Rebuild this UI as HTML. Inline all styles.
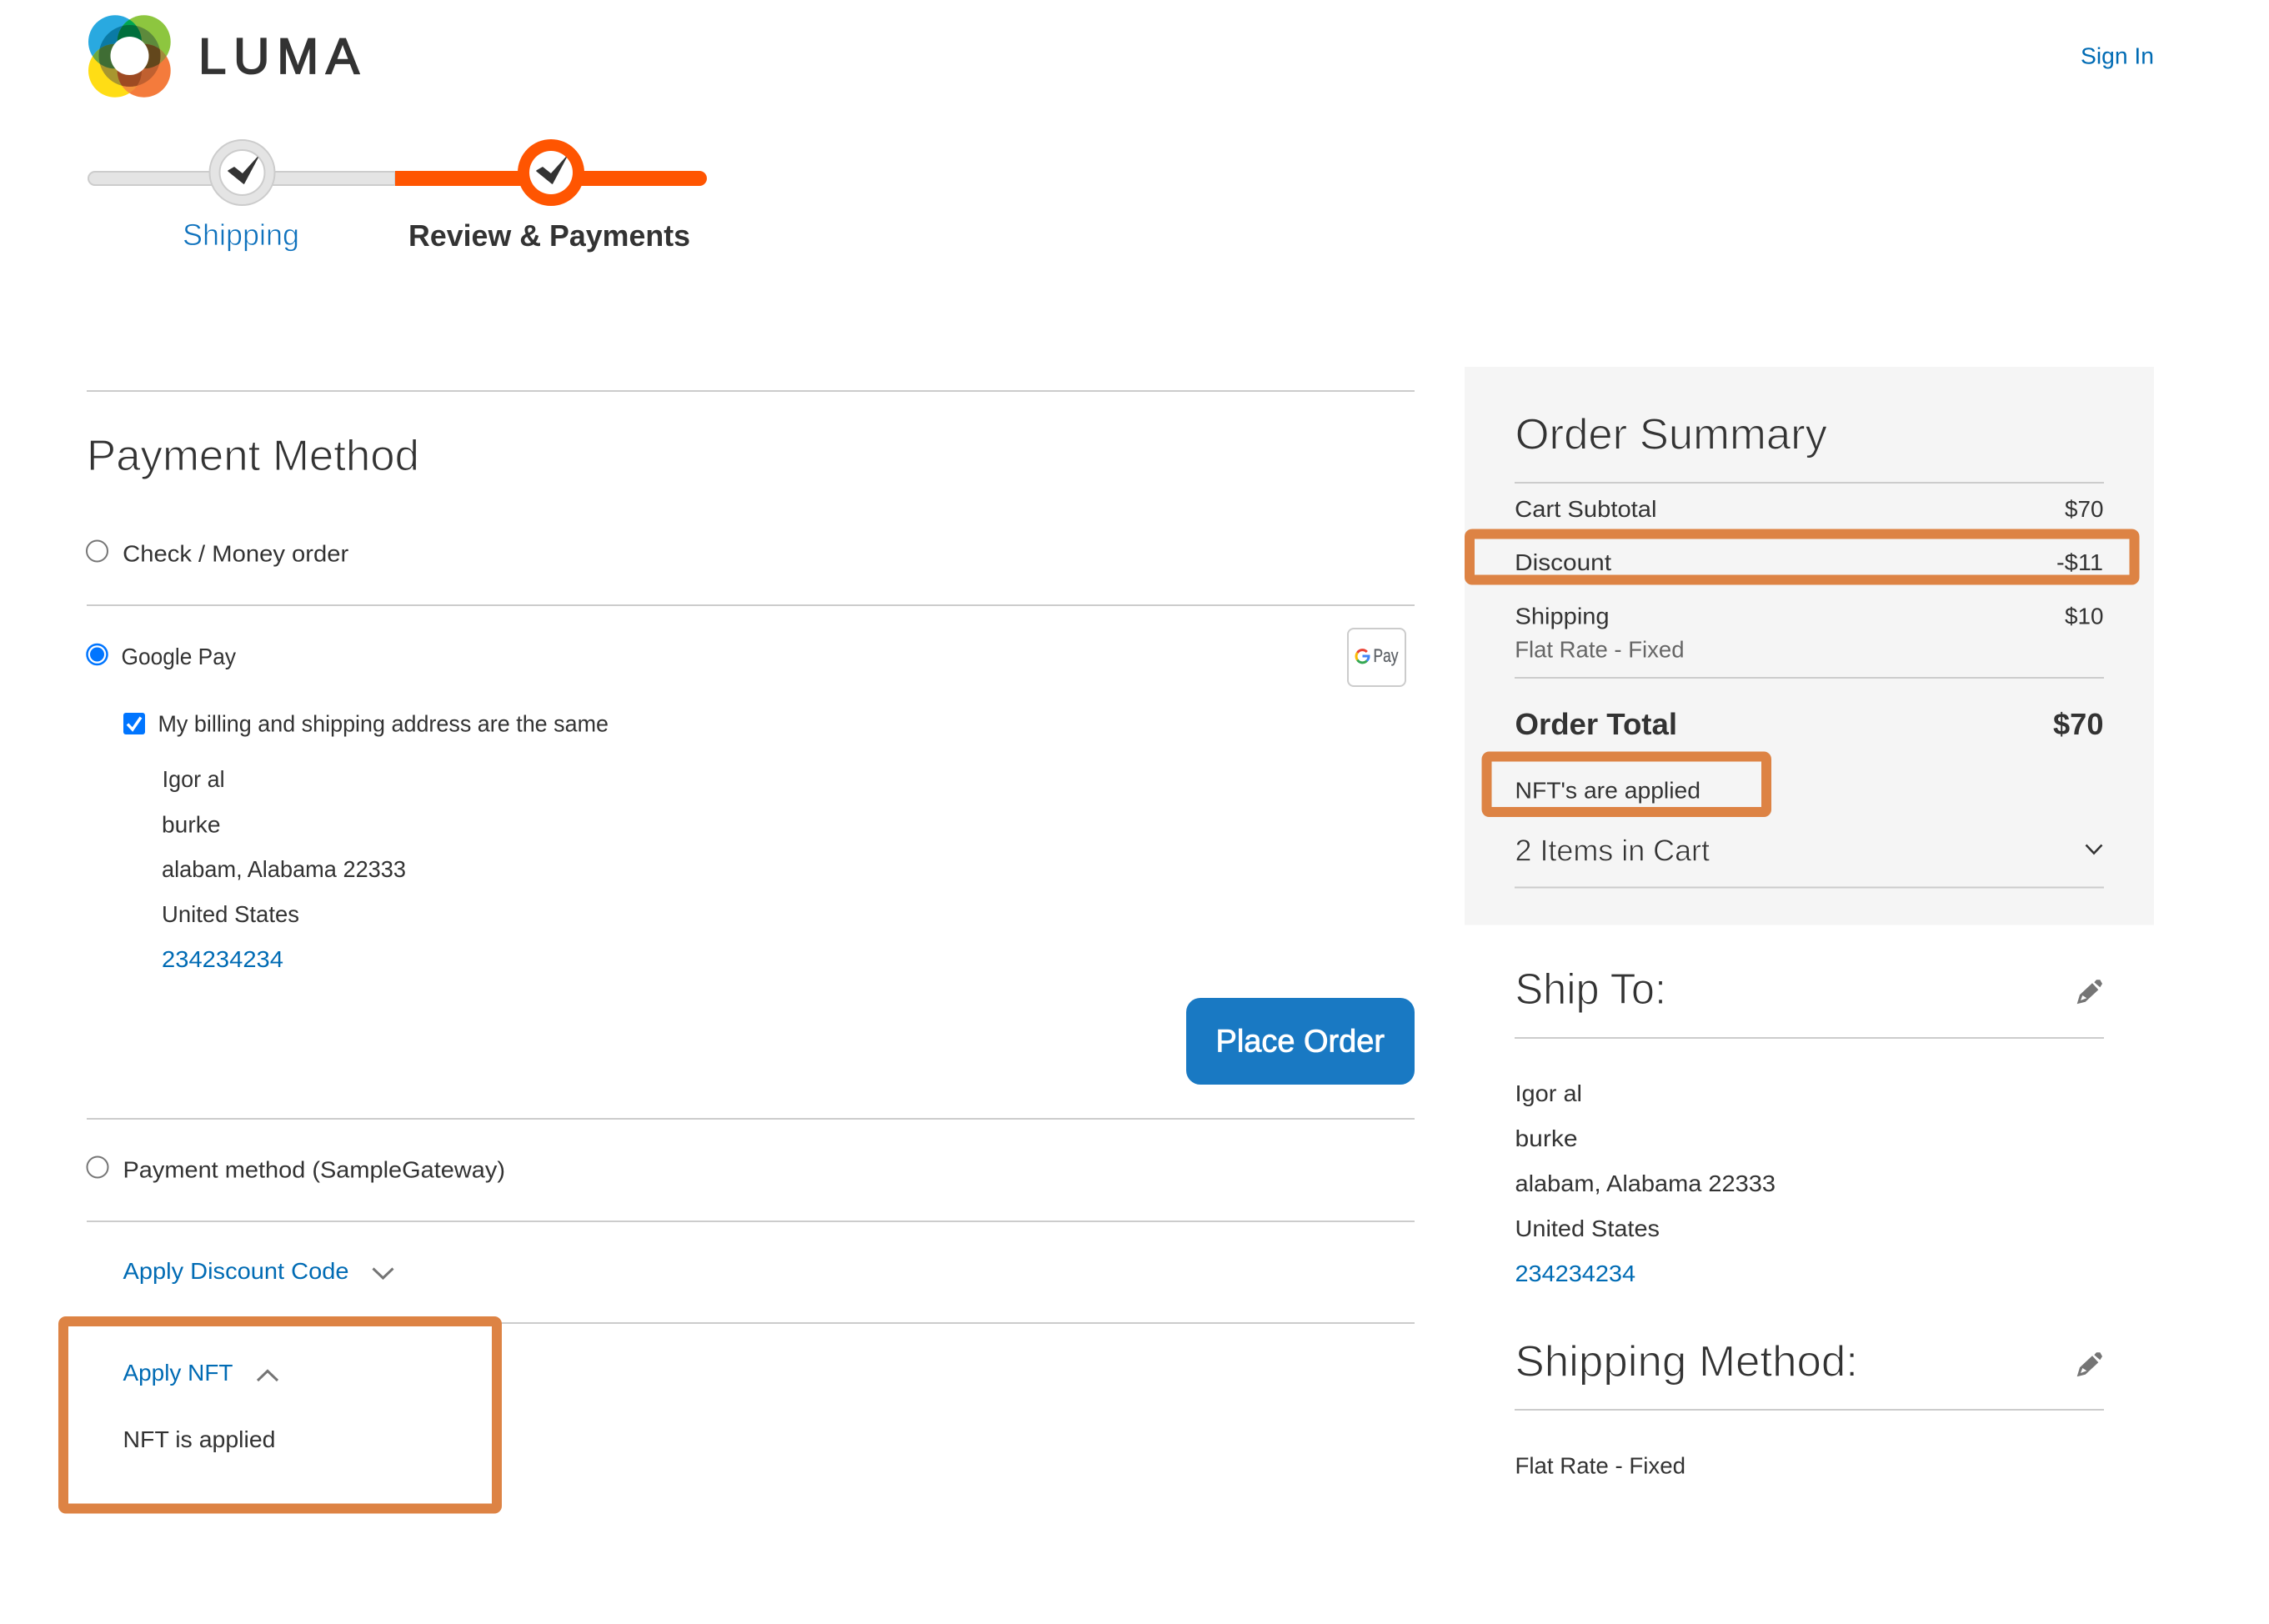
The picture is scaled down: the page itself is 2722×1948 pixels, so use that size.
<!DOCTYPE html>
<html lang="en"><head><meta charset="utf-8"><title>Checkout</title>
<style>
html,body{margin:0;padding:0;background:#fff;width:2722px;height:1948px;overflow:hidden}
svg{display:block;position:absolute;left:0;top:0}
text{font-family:"Liberation Sans",Arial,sans-serif;font-size:28px;fill:#333}
.t{font-size:52px;stroke:#fff;stroke-width:1.100px}
.g{stroke:#f5f5f5}
.l{fill:#006bb4}
.h{font-size:36px}
</style></head><body>
<svg width="2722" height="1948" viewBox="0 0 2722 1948" xmlns="http://www.w3.org/2000/svg">
<defs>
<clipPath id="cb"><circle cx="138" cy="50.3" r="32"/></clipPath>
<clipPath id="co"><circle cx="172.7" cy="84.7" r="32"/></clipPath>
<clipPath id="cc"><circle cx="155.5" cy="67" r="37"/></clipPath>
</defs>
<!-- logo -->
<g>
<circle cx="138" cy="50.3" r="32" fill="#29a9e0"/><circle cx="172.7" cy="50.3" r="32" fill="#8dc63f"/>
<circle cx="138" cy="84.7" r="32" fill="#ffdd15"/><circle cx="172.7" cy="84.7" r="32" fill="#f47b3c"/>
<g clip-path="url(#cb)"><circle cx="172.7" cy="50.3" r="32" fill="#00a651"/></g>
<g clip-path="url(#cb)"><circle cx="138" cy="84.7" r="32" fill="#6da83f"/></g>
<g clip-path="url(#co)"><circle cx="172.7" cy="50.3" r="32" fill="#a08a3c"/></g>
<g clip-path="url(#co)"><circle cx="138" cy="84.7" r="32" fill="#f4913a"/></g>
<g clip-path="url(#cc)">
<circle cx="138" cy="50.3" r="32" fill="#0a7aa5"/><circle cx="172.7" cy="50.3" r="32" fill="#5d8a3c"/>
<circle cx="138" cy="84.7" r="32" fill="#a8962f"/><circle cx="172.7" cy="84.7" r="32" fill="#c06030"/>
<g clip-path="url(#cb)"><circle cx="172.7" cy="50.3" r="32" fill="#006f3c"/></g>
<g clip-path="url(#cb)"><circle cx="138" cy="84.7" r="32" fill="#3f6d34"/></g>
<g clip-path="url(#co)"><circle cx="172.7" cy="50.3" r="32" fill="#63471c"/></g>
<g clip-path="url(#co)"><circle cx="138" cy="84.7" r="32" fill="#9e4a22"/></g>
</g>
<circle cx="155.5" cy="67" r="23" fill="#fff"/>
</g>
<text x="238" y="88" style="font-size:60px;stroke:#333;stroke-width:1.800px" textLength="193" lengthAdjust="spacing">LUMA</text>
<text x="2496" y="76.500" class="l" textLength="88" lengthAdjust="spacingAndGlyphs">Sign In</text>

<!-- progress -->
<path d="M474 206H114a8 8 0 0 0 0 16H474Z" fill="#e4e4e4" stroke="#ccc" stroke-width="2"/>
<path d="M474 205H839a9 9 0 0 1 0 18H474Z" fill="#ff5501"/>
<circle cx="290.5" cy="207" r="39" fill="#e4e4e4" stroke="#ccc" stroke-width="2"/>
<circle cx="290.5" cy="207" r="27" fill="#fff" stroke="#ccc" stroke-width="2"/>
<path d="M274 205L281 201L291 209L309 189L292.500 220Z" fill="#333" stroke="#333" stroke-width="1.600" stroke-linejoin="round"/>
<circle cx="661" cy="207" r="40" fill="#ff5501"/>
<circle cx="661" cy="207" r="26" fill="#fff"/>
<path d="M644 205L651 201L661 209L679 189L662.500 220Z" fill="#333" stroke="#333" stroke-width="1.600" stroke-linejoin="round"/>
<text x="219" y="294" class="h" style="fill:#0f72bd;stroke:#fff;stroke-width:.7px" textLength="140" lengthAdjust="spacingAndGlyphs">Shipping</text>
<text x="490" y="295" class="h" font-weight="700" textLength="338" lengthAdjust="spacingAndGlyphs">Review &amp; Payments</text>

<!-- left lines -->
<g fill="#ccc">
<rect x="104" y="468" width="1593" height="2"/>
<rect x="104" y="725" width="1593" height="2"/>
<rect x="104" y="1341" width="1593" height="2"/>
<rect x="104" y="1464" width="1593" height="2"/>
<rect x="104" y="1586" width="1593" height="2"/>
</g>
<text x="104" y="564" class="t" textLength="399" lengthAdjust="spacingAndGlyphs">Payment Method</text>

<circle cx="116.500" cy="661" r="12.500" fill="#fff" stroke="#767676" stroke-width="2"/>
<text x="147.200" y="673.600" textLength="271" lengthAdjust="spacingAndGlyphs">Check / Money order</text>

<circle cx="116.500" cy="785" r="12" fill="#fff" stroke="#0075ff" stroke-width="2.500"/>
<circle cx="116.500" cy="785" r="8.500" fill="#0075ff"/>
<text x="145.500" y="797" textLength="137.500" lengthAdjust="spacingAndGlyphs">Google Pay</text>

<rect x="1617" y="754" width="69" height="69" rx="7" fill="#fff" stroke="#ccc" stroke-width="2"/>
<g fill="none" stroke-width="3">
<path d="M1639.800 782A7.200 7.200 0 0 0 1628.400 783" stroke="#ea4335"/>
<path d="M1628.400 783A7.200 7.200 0 0 0 1628.400 791.500" stroke="#fbbc04"/>
<path d="M1628.400 791.500A7.200 7.200 0 0 0 1639.800 792.500" stroke="#34a853"/>
<path d="M1639.800 792.500A7.200 7.200 0 0 0 1642 787H1634.500" stroke="#4285f4"/>
</g>
<text x="1647.500" y="794" style="font-size:22px;fill:#5f6368;stroke:#5f6368;stroke-width:.3px" textLength="30" lengthAdjust="spacingAndGlyphs">Pay</text>

<rect x="148" y="855" width="26" height="26" rx="3" fill="#0075ff"/>
<path d="M153 868.500L159 875L169 860.500" fill="none" stroke="#fff" stroke-width="3.500"/>
<text x="189.500" y="877.500" textLength="540.500" lengthAdjust="spacingAndGlyphs">My billing and shipping address are the same</text>

<text x="194.600" y="944" textLength="75" lengthAdjust="spacingAndGlyphs">Igor al</text>
<text x="194" y="998.600" textLength="70.500" lengthAdjust="spacingAndGlyphs">burke</text>
<text x="194" y="1052" textLength="293" lengthAdjust="spacingAndGlyphs">alabam, Alabama 22333</text>
<text x="194" y="1106" textLength="165" lengthAdjust="spacingAndGlyphs">United States</text>
<text x="194" y="1160" class="l" textLength="146" lengthAdjust="spacingAndGlyphs">234234234</text>

<rect x="1423" y="1197" width="274" height="104" rx="17" fill="#1979c3"/>
<text x="1458.500" y="1261.700" style="font-size:38px;fill:#fff;stroke:#fff;stroke-width:.8px" textLength="202.500" lengthAdjust="spacingAndGlyphs">Place Order</text>

<circle cx="117" cy="1400" r="12.500" fill="#fff" stroke="#767676" stroke-width="2"/>
<text x="147.500" y="1412.500" textLength="458.500" lengthAdjust="spacingAndGlyphs">Payment method (SampleGateway)</text>
<text x="147.500" y="1534" class="l" textLength="271" lengthAdjust="spacingAndGlyphs">Apply Discount Code</text>
<path d="M447.500 1521.500L459.500 1533L471.500 1521.500" fill="none" stroke="#757575" stroke-width="3"/>
<text x="147.500" y="1656" class="l" textLength="132" lengthAdjust="spacingAndGlyphs">Apply NFT</text>
<path d="M309 1656L321 1644.500L333 1656" fill="none" stroke="#757575" stroke-width="3"/>
<text x="147.500" y="1736" textLength="183" lengthAdjust="spacingAndGlyphs">NFT is applied</text>
<rect x="76" y="1585" width="520" height="224.500" rx="3" fill="none" stroke="#dd8344" stroke-width="12"/>

<!-- summary -->
<rect x="1757" y="440" width="827" height="669.500" fill="#f5f5f5"/>
<text x="1817.600" y="538.500" class="t g" textLength="374.400" lengthAdjust="spacingAndGlyphs">Order Summary</text>
<g fill="#ccc">
<rect x="1817" y="578" width="707" height="2"/>
<rect x="1817" y="812" width="707" height="2"/>
<rect x="1817" y="1063.500" width="707" height="2"/>
<rect x="1817" y="1244" width="707" height="2"/>
<rect x="1817" y="1690" width="707" height="2"/>
</g>
<text x="1817.200" y="620" textLength="170.300" lengthAdjust="spacingAndGlyphs">Cart Subtotal</text>
<text x="2477" y="620" textLength="46.500" lengthAdjust="spacingAndGlyphs">$70</text>
<text x="1817.200" y="684" textLength="115.800" lengthAdjust="spacingAndGlyphs">Discount</text>
<text x="2467" y="684" textLength="56" lengthAdjust="spacingAndGlyphs">-$11</text>
<rect x="1763" y="640.500" width="797.500" height="55" rx="3" fill="none" stroke="#dd8344" stroke-width="12"/>
<text x="1817.500" y="748.500" textLength="113.100" lengthAdjust="spacingAndGlyphs">Shipping</text>
<text x="2477" y="748.500" textLength="46.500" lengthAdjust="spacingAndGlyphs">$10</text>
<text x="1817.200" y="788.500" style="fill:#666" textLength="203.300" lengthAdjust="spacingAndGlyphs">Flat Rate - Fixed</text>
<text x="1817.500" y="881" class="h" font-weight="700" textLength="194.500" lengthAdjust="spacingAndGlyphs">Order Total</text>
<text x="2463" y="881" class="h" font-weight="700" textLength="60.500" lengthAdjust="spacingAndGlyphs">$70</text>
<text x="1817.500" y="957.500" textLength="222.500" lengthAdjust="spacingAndGlyphs">NFT's are applied</text>
<rect x="1783.500" y="907.500" width="335.500" height="66.500" rx="3" fill="none" stroke="#dd8344" stroke-width="12"/>
<text x="1817.500" y="1032.700" class="h g" style="stroke-width:.7px" textLength="233.500" lengthAdjust="spacingAndGlyphs">2 Items in Cart</text>
<path d="M2502.500 1013.500L2512 1023.500L2521.500 1013.500" fill="none" stroke="#333" stroke-width="2.500"/>

<!-- ship to -->
<text x="1817.500" y="1204" class="t" textLength="181.500" lengthAdjust="spacingAndGlyphs">Ship To:</text>
<g fill="#757575">
<path d="M2495 1193.300L2510 1179.300L2517.300 1187.300L2501.700 1201.700L2491.700 1204.300Z"/>
<path d="M2512.300 1178.300L2515 1175.300L2519.300 1175.300L2522 1180L2519.300 1184.300Z"/>
<path d="M2496 1200L2498.300 1194L2503.300 1197.300Z" fill="#fff"/>
</g>
<text x="1817.500" y="1321" textLength="80.500" lengthAdjust="spacingAndGlyphs">Igor al</text>
<text x="1817.500" y="1375" textLength="75" lengthAdjust="spacingAndGlyphs">burke</text>
<text x="1817.500" y="1429" textLength="312.500" lengthAdjust="spacingAndGlyphs">alabam, Alabama 22333</text>
<text x="1817.500" y="1483" textLength="173.500" lengthAdjust="spacingAndGlyphs">United States</text>
<text x="1817.500" y="1537" class="l" textLength="144.500" lengthAdjust="spacingAndGlyphs">234234234</text>
<text x="1817.500" y="1650.500" class="t" textLength="411.500" lengthAdjust="spacingAndGlyphs">Shipping Method:</text>
<g transform="translate(0 447)" fill="#757575">
<path d="M2495 1193.300L2510 1179.300L2517.300 1187.300L2501.700 1201.700L2491.700 1204.300Z"/>
<path d="M2512.300 1178.300L2515 1175.300L2519.300 1175.300L2522 1180L2519.300 1184.300Z"/>
<path d="M2496 1200L2498.300 1194L2503.300 1197.300Z" fill="#fff"/>
</g>
<text x="1817.500" y="1767.500" textLength="204.500" lengthAdjust="spacingAndGlyphs">Flat Rate - Fixed</text>
</svg>
</body></html>
